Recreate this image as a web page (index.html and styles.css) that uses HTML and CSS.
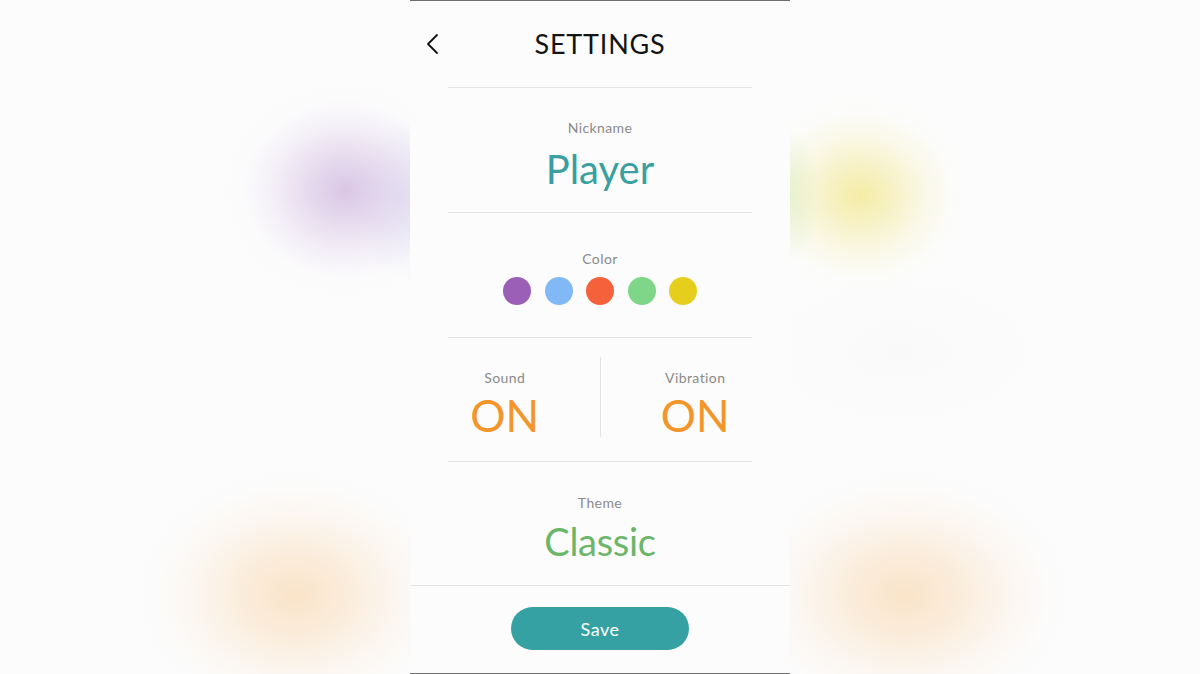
FILE: index.html
```html
<!DOCTYPE html>
<html>
<head>
<meta charset="utf-8">
<link rel="stylesheet" href="styles.css">
</head>
<body>
<div class="phone">
  <header class="topbar">
    <span class="back">
      <svg width="14" height="22" viewBox="0 0 14 22"><polyline points="11,2 2,11 11,20" fill="none" stroke="#111" stroke-width="1.8" stroke-linecap="round" stroke-linejoin="round"/></svg>
    </span>
    <h1 class="title">SETTINGS</h1>
    <span></span>
  </header>
  <main class="content">
    <hr class="divider">
    <section class="row nick">
      <div class="label">Nickname</div>
      <div class="value teal">Player</div>
    </section>
    <hr class="divider">
    <section class="row colors">
      <div class="label">Color</div>
      <div class="swatches">
        <span class="dot purple"></span>
        <span class="dot blue"></span>
        <span class="dot red"></span>
        <span class="dot green"></span>
        <span class="dot yellow"></span>
      </div>
    </section>
    <hr class="divider">
    <section class="row split">
      <div class="half">
        <div class="label">Sound</div>
        <div class="value orange">ON</div>
      </div>
      <div class="vline"></div>
      <div class="half">
        <div class="label">Vibration</div>
        <div class="value orange">ON</div>
      </div>
    </section>
    <hr class="divider">
    <section class="row theme">
      <div class="label">Theme</div>
      <div class="value greentext">Classic</div>
    </section>
  </main>
  <footer class="footer">
    <button class="save">Save</button>
  </footer>
</div>
</body>
</html>
```

FILE: styles.css
```css
* { box-sizing: border-box; }
html, body { margin: 0; padding: 0; }
body {
  width: 1200px;
  height: 674px;
  overflow: hidden;
  font-family: "Lato", "Open Sans", sans-serif;
  display: flex;
  justify-content: center;
  background:
    radial-gradient(ellipse 120px 105px at 345px 190px, rgba(214,192,226,0.9) 0%, rgba(218,200,230,0.65) 30%, rgba(228,215,238,0.35) 60%, rgba(245,240,248,0.1) 85%, rgba(252,252,252,0) 100%),
    radial-gradient(ellipse 55px 80px at 408px 200px, rgba(208,212,240,0.55) 0%, rgba(255,255,255,0) 100%),
    radial-gradient(ellipse 110px 100px at 860px 195px, rgba(243,234,155,0.9) 0%, rgba(244,236,170,0.65) 30%, rgba(246,241,195,0.35) 60%, rgba(250,250,235,0.1) 85%, rgba(252,252,252,0) 100%),
    radial-gradient(ellipse 28px 65px at 792px 195px, rgba(205,233,185,0.6) 0%, rgba(255,255,255,0) 100%),
    radial-gradient(ellipse 165px 130px at 295px 595px, rgba(250,226,198,0.95) 0%, rgba(250,229,204,0.7) 30%, rgba(250,236,220,0.4) 60%, rgba(252,248,244,0.1) 85%, rgba(252,252,252,0) 100%),
    radial-gradient(ellipse 170px 130px at 905px 595px, rgba(250,226,198,0.95) 0%, rgba(250,229,204,0.7) 30%, rgba(250,236,220,0.4) 60%, rgba(252,248,244,0.1) 85%, rgba(252,252,252,0) 100%),
    radial-gradient(ellipse 130px 70px at 900px 350px, rgba(244,244,244,0.4) 0%, rgba(252,252,252,0) 100%),
    #fcfcfc;
}
.phone {
  width: 380px;
  height: 674px;
  background: #fcfcfc;
  border-top: 1px solid #6e6e6e;
  border-bottom: 1px solid #6e6e6e;
  display: flex;
  flex-direction: column;
}
.topbar {
  height: 86px;
  display: grid;
  grid-template-columns: 1fr auto 1fr;
  align-items: center;
}
.back { display: flex; align-items: center; height: 22px; margin-left: 16px; }
.back svg { display: block; }
.title {
  margin: 0;
  font-weight: 400;
  font-size: 27px;
  letter-spacing: 0.8px;
  color: #141414;
  line-height: 30px;
}
.content {
  display: flex;
  flex-direction: column;
}
.divider {
  margin: 0 38px;
  border: none;
  height: 1px;
  background: #e3e3e3;
}
.row {
  height: 124px;
  display: flex;
  flex-direction: column;
  align-items: center;
}
.nick { padding-top: 31px; }
.colors { padding-top: 37px; }
.theme { height: 123px; padding-top: 32px; }
.label {
  font-size: 14px;
  line-height: 18px;
  color: #8a8a8a;
  letter-spacing: 0.4px;
}
.value {
  font-size: 40px;
  line-height: 48px;
  margin-top: 8px;
}
.teal { color: #3a9fa0; }
.orange { color: #f2952a; font-size: 44px; }
.greentext { color: #6bb669; font-size: 38px; letter-spacing: -0.3px; }
.theme .value { margin-top: 5px; }
.swatches {
  display: flex;
  gap: 13.5px;
  margin-top: 9px;
}
.dot { width: 28px; height: 28px; border-radius: 50%; display: block; }
.purple { background: #9b5fb8; }
.blue { background: #80b9f6; }
.red { background: #f5613b; }
.green { background: #7fd688; }
.yellow { background: #e6cf1c; }
.split {
  flex-direction: row;
  align-items: stretch;
  padding: 19px 0 24px;
  height: 123px;
}
.half {
  flex: 1;
  display: flex;
  flex-direction: column;
  align-items: center;
  padding-top: 12px;
}
.half .value { margin-top: 4px; }
.vline { width: 1px; background: #e3e3e3; }
.footer {
  border-top: 1px solid #e3e3e3;
  flex: 1;
  display: flex;
  justify-content: center;
  align-items: center;
  padding-bottom: 2px;
}
.save {
  width: 178px;
  height: 43px;
  border: none;
  border-radius: 22px;
  background: #35a1a3;
  color: #fff;
  font-family: "Lato", "Open Sans", sans-serif;
  font-size: 18px;
  letter-spacing: 0.5px;
  padding: 0;
}
```
